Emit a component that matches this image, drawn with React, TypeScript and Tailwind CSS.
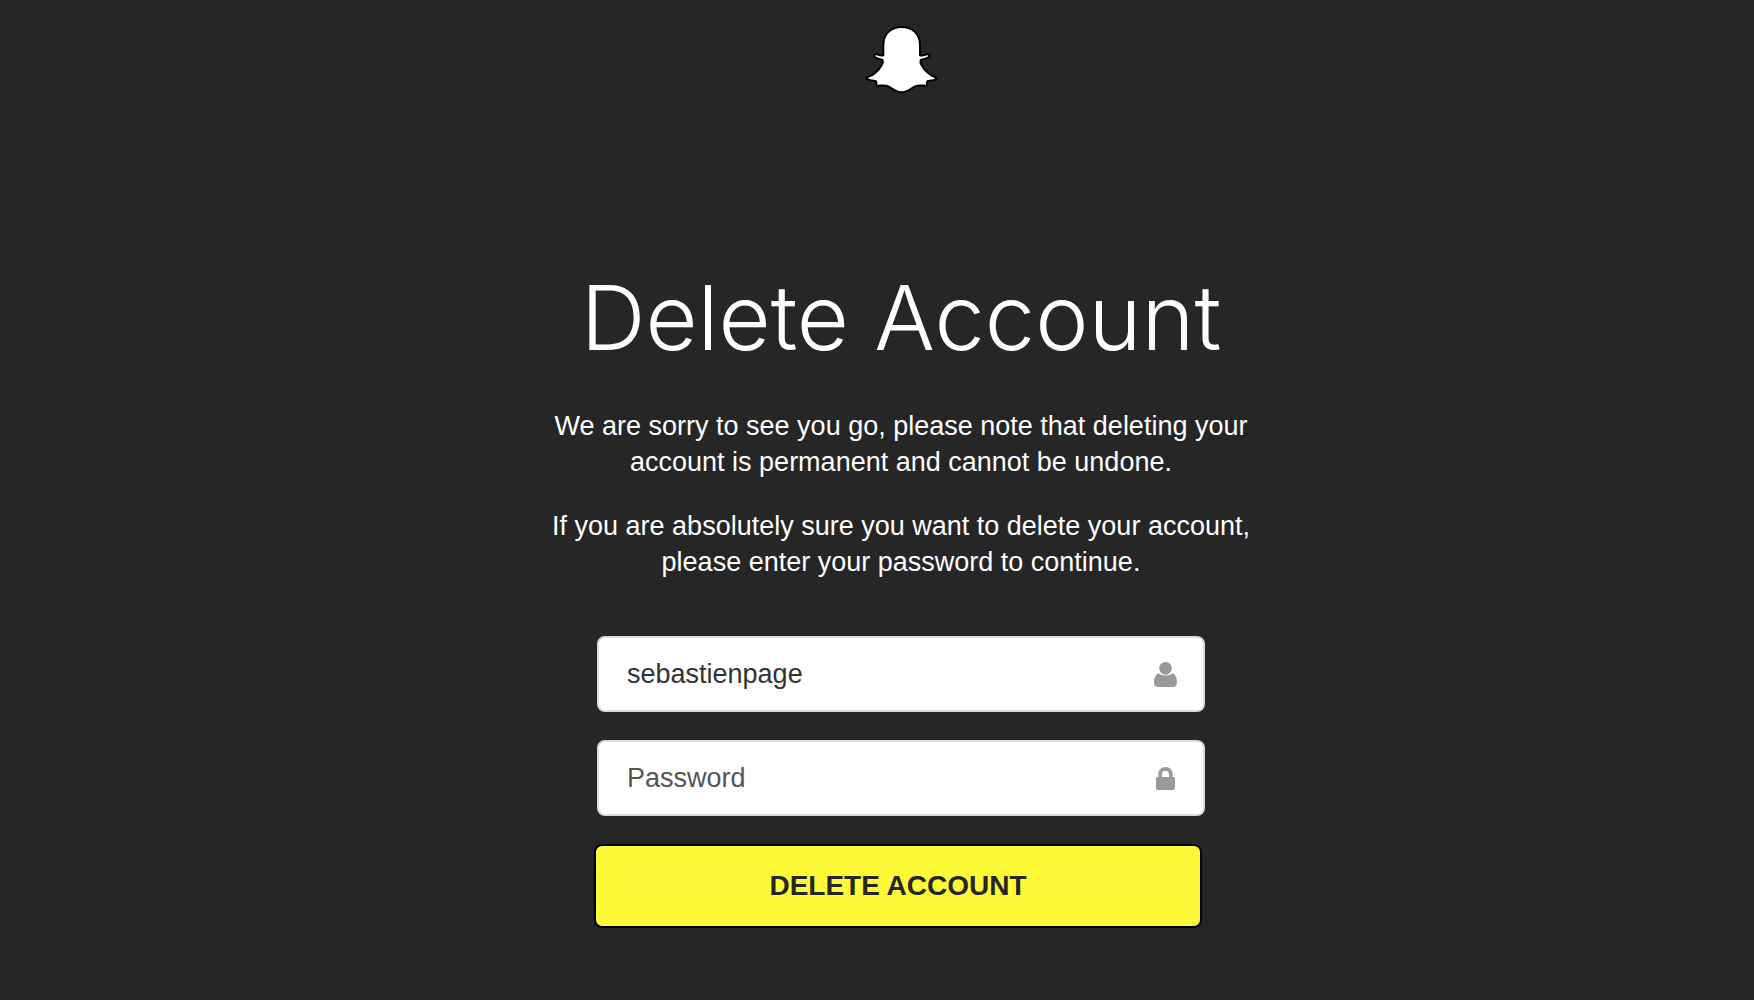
import { useState } from "react";
import type { FormEvent, InputHTMLAttributes, ReactNode } from "react";

const GhostLogo = () => (
  <svg viewBox="44 31 219 207" className="w-[73px] h-[69px]" aria-hidden="true">
    <path
      d="M154 37C122 37 99 58 99 91V122C94 124 87 122 80 119C73 117 68 124 74 128C80 132 88 134 97 136C99 142 97 147 94 152C85 168 72 181 49 189C48 192 50 193 53 194C61 197 69 198 77 200C80 204 76 208 79 213C90 214 103 210 114 215C127 221 136 233 154 233C172 233 181 221 194 215C205 210 218 214 229 213C232 208 228 204 231 200C239 198 248 197 256 194C260 192 259 190 256 189C236 181 223 168 214 152C211 147 209 142 211 136C220 134 228 132 234 128C240 124 235 117 228 119C221 122 214 124 209 122V91C209 58 186 37 154 37Z"
      fill="#fff"
      stroke="#000"
      strokeWidth="6"
      strokeLinejoin="round"
    />
  </svg>
);

const UserIcon = () => (
  <svg viewBox="0 0 69 75" className="w-[23px] h-[25px]" fill="#999" aria-hidden="true">
    <circle cx="34.5" cy="19" r="19" />
    <path d="M14 34C5 37 0 48 0 61C0 70 4 75 12 75H57C65 75 69 70 69 61C69 48 64 37 55 34C45 43 24 43 14 34Z" />
  </svg>
);

const LockIcon = () => (
  <svg viewBox="0 0 57 69" className="w-[19px] h-[23px] mr-0.5" fill="#999" aria-hidden="true">
    <path
      fillRule="evenodd"
      d="M7 30V22C7 9 16 0 28.5 0S50 9 50 22V30H52C55 30 57 32 57 35V63C57 67 55 69 51 69H6C2 69 0 67 0 63V35C0 32 2 30 5 30ZM18 30H39V22C39 15 35 11 28.5 11S18 15 18 22Z"
    />
  </svg>
);

type FieldProps = InputHTMLAttributes<HTMLInputElement> & {
  icon: ReactNode;
};

const Field = ({ icon, ...inputProps }: FieldProps) => (
  <label className="flex items-center h-[76px] mx-[3px] pl-7 pr-[26px] bg-white border-2 border-[#ddd] rounded-lg">
    <input
      className="flex-1 min-w-0 bg-transparent text-[27px] leading-9 text-[#333] placeholder:text-[#555] outline-none"
      {...inputProps}
    />
    {icon}
  </label>
);

export default function App() {
  const [username, setUsername] = useState("sebastienpage");
  const [password, setPassword] = useState("");

  const handleSubmit = (e: FormEvent) => {
    e.preventDefault();
  };

  return (
    <div className="min-h-screen flex flex-col items-center pl-12 pt-[25px] pb-[72px] bg-[#262626] text-white font-['Liberation_Sans',Arial,sans-serif]">
      <header>
        <a href="#" aria-label="Snapchat" className="block">
          <GhostLogo />
        </a>
      </header>

      <main className="flex flex-col items-center w-full max-w-[720px] mt-[170px] text-center">
        <h1 className="text-[90px] leading-[108px] font-light font-[Inter,'Liberation_Sans',sans-serif]">
          Delete Account
        </h1>

        <div className="flex flex-col gap-7 mt-9 text-[27px] leading-9">
          <p>
            We are sorry to see you go, please note that deleting your
            <br />
            account is permanent and cannot be undone.
          </p>
          <p>
            If you are absolutely sure you want to delete your account,
            <br />
            please enter your password to continue.
          </p>
        </div>

        <form onSubmit={handleSubmit} className="flex flex-col gap-7 w-full max-w-[614px] mt-14">
          <Field
            icon={<UserIcon />}
            type="text"
            aria-label="Username"
            value={username}
            onChange={(e) => setUsername(e.target.value)}
          />
          <Field
            icon={<LockIcon />}
            type="password"
            aria-label="Password"
            placeholder="Password"
            value={password}
            onChange={(e) => setPassword(e.target.value)}
          />
          <button
            type="submit"
            className="h-[84px] mr-1.5 bg-[#fffa37] border-2 border-black rounded-lg text-[28px] leading-9 font-bold text-[#262626] cursor-pointer"
          >
            DELETE ACCOUNT
          </button>
        </form>
      </main>
    </div>
  );
}
